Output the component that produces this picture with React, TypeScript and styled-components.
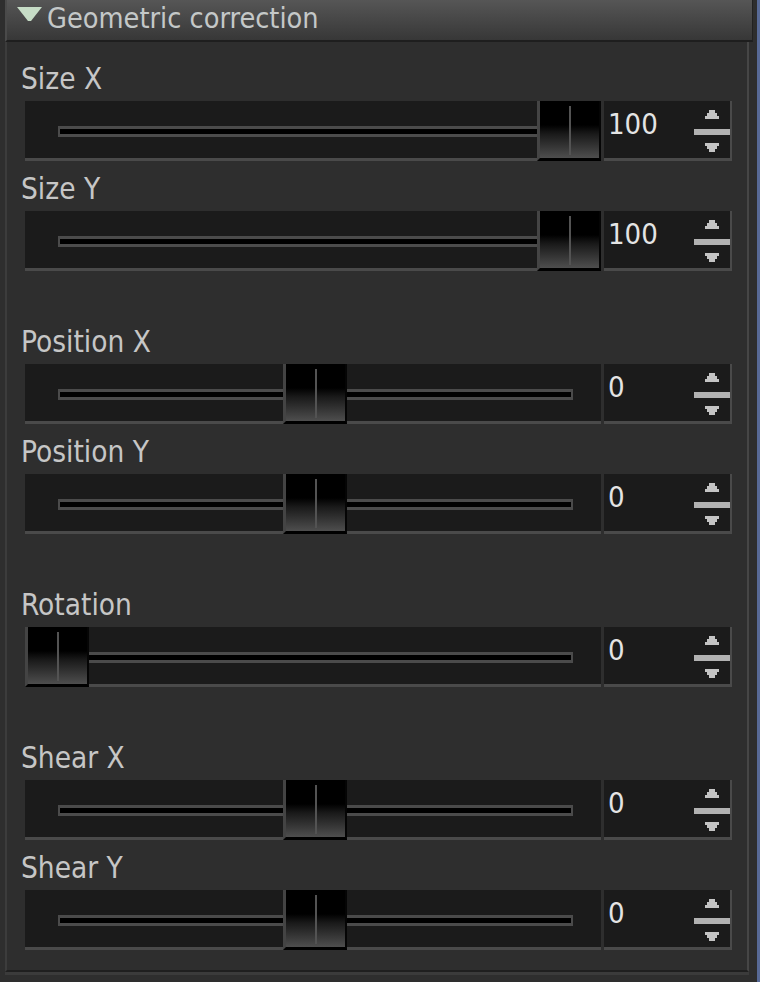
import styled, { createGlobalStyle } from 'styled-components';

const GlobalStyle = createGlobalStyle`
  * { box-sizing: border-box; }
  html, body { margin: 0; padding: 0; background: #2e2e2e; }
  body {
    font-family: "DejaVu Sans Condensed", "DejaVu Sans", sans-serif;
    font-stretch: condensed;
  }
`;

const Page = styled.div`
  width: 760px;
  height: 982px;
  display: flex;
  background: #2e2e2e;
  overflow: hidden;
`;

const Column = styled.div`
  width: 757px;
  padding-left: 5px;
`;

const Edge = styled.div`
  width: 3px;
  background: #586a96;
`;

const Header = styled.div`
  width: 748px;
  height: 42px;
  display: flex;
  align-items: flex-start;
  gap: 5px;
  padding: 1px 0 0 10px;
  background: linear-gradient(to bottom, #565656, #373737);
  border-left: 2px solid #4a4a4a;
  border-right: 1px solid #222;
  border-bottom: 2px solid #1e1e1e;
`;

const Arrow = styled.svg`
  margin-top: 6px;
  flex: none;
`;

const Title = styled.span`
  font-size: 28.6px;
  line-height: 34px;
  color: #c4c8c8;
`;

const Body = styled.div`
  width: 744px;
  padding: 9px 15px 20px 18px;
  border-left: 2px solid #3c3c3c;
  border-right: 2px solid #464646;
  border-bottom: 2px solid #1f1f1f;
  box-shadow: 0 3px 0 #3b3b3b;
`;

const Group = styled.div<{ $first?: boolean }>`
  margin-top: ${p => (p.$first ? 0 : 43)}px;
`;

const Label = styled.div`
  height: 45px;
  padding-top: 11px;
  margin: 0 0 5px -4px;
  font-size: 29.5px;
  line-height: 34px;
  color: #c6c6c6;
`;

const Row = styled.div`
  display: grid;
  grid-template-columns: 576px 128px;
  column-gap: 3px;
`;

const Track = styled.div`
  position: relative;
  height: 60px;
  background: #1b1b1b;
  border-bottom: 3px solid #4a4a4a;
`;

const Groove = styled.div`
  position: absolute;
  left: 33px;
  right: 28px;
  top: 25px;
  height: 11px;
  background: #000;
  border: 3px solid #4b4b4b;
  border-left-width: 2px;
  border-right-width: 2px;
`;

const Handle = styled.div`
  position: absolute;
  top: 0;
  width: 64px;
  height: 60px;
  background: linear-gradient(to bottom, #000 0%, #000 42%, #1a1a1a 58%, #4e4e4e 100%);
  border-left: 3px solid #444;
  border-right: 2px solid #050505;
  border-bottom: 3px solid #000;
  &::after {
    content: '';
    position: absolute;
    left: 29px;
    top: 5px;
    bottom: 3px;
    width: 2px;
    background: #535353;
  }
`;

const ValueBox = styled.div`
  position: relative;
  height: 60px;
  background: #1b1b1b;
  border-bottom: 3px solid #4a4a4a;
  border-right: 2px solid #4a4a4a;
  padding: 6px 0 0 4px;
  font-size: 29px;
  line-height: 34px;
  color: #e4e4e4;
`;

const Spinner = styled.svg`
  position: absolute;
  right: 0;
  top: 9px;
`;

type Field = { label: string; value: number; min: number; max: number };

const groups: Field[][] = [
  [
    { label: 'Size X', value: 100, min: 0, max: 100 },
    { label: 'Size Y', value: 100, min: 0, max: 100 },
  ],
  [
    { label: 'Position X', value: 0, min: -100, max: 100 },
    { label: 'Position Y', value: 0, min: -100, max: 100 },
  ],
  [{ label: 'Rotation', value: 0, min: 0, max: 360 }],
  [
    { label: 'Shear X', value: 0, min: -100, max: 100 },
    { label: 'Shear Y', value: 0, min: -100, max: 100 },
  ],
];

function SpinIcon() {
  return (
    <Spinner width="36" height="42" viewBox="0 0 36 42">
      <g fill="#c4c4c4">
        <rect x="15" y="0" width="6" height="3" />
        <rect x="13" y="3" width="10" height="3" />
        <rect x="11" y="6" width="14" height="3" />
        <rect x="11" y="33" width="14" height="3" />
        <rect x="13" y="36" width="10" height="3" />
        <rect x="15" y="39" width="6" height="3" />
      </g>
      <rect x="0" y="19" width="36" height="6" fill="#b2b2b2" />
    </Spinner>
  );
}

function SliderField({ field }: { field: Field }) {
  const frac = (field.value - field.min) / (field.max - field.min);
  const left = Math.round(frac * 512 + (frac === 0.5 ? 2 : 0));
  return (
    <div>
      <Label>{field.label}</Label>
      <Row>
        <Track>
          <Groove />
          <Handle style={{ left }} />
        </Track>
        <ValueBox>
          {field.value}
          <SpinIcon />
        </ValueBox>
      </Row>
    </div>
  );
}

export default function App() {
  return (
    <Page>
      <GlobalStyle />
      <Column>
        <Header>
          <Arrow width="25" height="14" viewBox="0 0 25 14">
            <polygon points="0,0 25,0 14,14 11,14" fill="#c6dcc6" />
          </Arrow>
          <Title>Geometric correction</Title>
        </Header>
        <Body>
          {groups.map((g, i) => (
            <Group key={i} $first={i === 0}>
              {g.map(f => (
                <SliderField key={f.label} field={f} />
              ))}
            </Group>
          ))}
        </Body>
      </Column>
      <Edge />
    </Page>
  );
}
